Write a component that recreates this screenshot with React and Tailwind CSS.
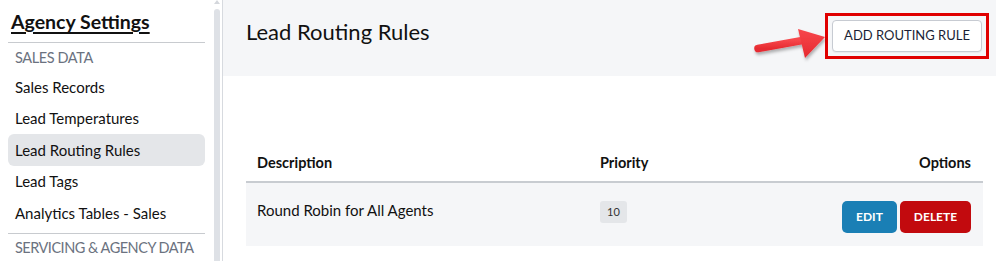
import React from "react";

const font = { fontFamily: "Lato, 'Noto Sans', sans-serif" };

function Sidebar() {
  const items = ["Sales Records", "Lead Temperatures", "Lead Routing Rules", "Lead Tags", "Analytics Tables - Sales"];
  return (
    <div className="w-[213px] shrink-0 pl-[8px] pr-[8px] pt-[9px]">
      <div className="pl-[3px] text-[19.5px] font-bold underline underline-offset-[3px] decoration-[2px] text-[#111] leading-[26px] h-[33px]">
        Agency Settings
      </div>
      <div className="h-px bg-[#c8cbcf]" />
      <div className="pl-[7px] pt-[5px] text-[14.5px] tracking-[-0.4px] text-[#6b7280] leading-[20px] h-[28px]">SALES DATA</div>
      <div className="flex flex-col">
        {items.map((t) => (
          <div
            key={t}
            className={
              "h-[31.5px] flex items-center pl-[7px] text-[15px] text-[#111] rounded-[6px] " +
              (t === "Lead Routing Rules" ? "bg-[#e4e6e9]" : "")
            }
          >
            {t}
          </div>
        ))}
      </div>
      <div className="h-px bg-[#c8cbcf] mt-[4px]" />
      <div className="pl-[7px] pt-[4px] text-[14.5px] tracking-[-0.5px] text-[#6b7280] leading-[20px] whitespace-nowrap">SERVICING &amp; AGENCY DATA</div>
    </div>
  );
}

function Scroll() {
  return (
    <div className="w-[10px] shrink-0 flex">
      <div className="w-[1px]" />
      <div className="w-[6px] flex flex-col items-center">
        <div className="w-0 h-0 border-l-[3px] border-r-[3px] border-b-[4px] border-l-transparent border-r-transparent border-b-[#d4d7dc]" />
        <div className="w-[6px] flex-1 bg-[#dee1e6] rounded-t-[3px] mt-[5px]" />
      </div>
      <div className="w-[2px]" />
      <div className="w-[1px] bg-[#d7dadf]" />
    </div>
  );
}

function Arrow() {
  return (
    <svg width="90" height="50" viewBox="0 0 90 50" className="absolute left-[522px] top-[20px]">
      <defs>
        <filter id="sh" x="-20%" y="-30%" width="140%" height="170%">
          <feDropShadow dx="1" dy="2.5" stdDeviation="1.5" floodColor="#000" floodOpacity="0.3" />
        </filter>
        <linearGradient id="g" x1="0" y1="0" x2="0" y2="1">
          <stop offset="0" stopColor="#f7474c" />
          <stop offset="1" stopColor="#e62a30" />
        </linearGradient>
      </defs>
      <g filter="url(#sh)">
        <path d="M13 28.5 L60 20" stroke="url(#g)" strokeWidth="7.5" strokeLinecap="round" />
        <path d="M53 9 L80 17 L60 38 Z" fill="url(#g)" strokeLinejoin="round" />
      </g>
    </svg>
  );
}

export default function App() {
  return (
    <div className="w-[996px] h-[261px] overflow-hidden flex bg-white" style={font}>
      <Sidebar />
      <Scroll />
      <div className="flex-1 flex flex-col">
        <div className="relative h-[76px] bg-[#f5f6f8] flex items-start justify-between pl-[23px] pr-[7px]">
          <div className="pt-[17px] text-[22px] text-[#111] leading-[30px]">Lead Routing Rules</div>
          <Arrow />
          <div className="mt-[13px] border-[3px] border-[#e00000] p-[4px]">
            <div className="w-[150px] h-[32px] bg-white border border-[#c7cbd2] rounded-[4px] flex items-center justify-center text-[13px] text-[#1a1f36] shadow-[0_1px_1px_rgba(0,0,0,0.05)]">
              ADD ROUTING RULE
            </div>
          </div>
        </div>
        <div className="pl-[23px] pr-[13px] pt-[67px]">
          <div className="flex items-center h-[40px] pt-[2px] border-b-[2px] border-[#c8ccd1] text-[14.5px] font-bold text-[#111]">
            <div className="w-[354px] pl-[11px]">Description</div>
            <div className="flex-1">Priority</div>
            <div className="pr-[12px]">Options</div>
          </div>
          <div className="flex items-center h-[63px] bg-[#f5f6f8] text-[15px] text-[#111]">
            <div className="w-[354px] pl-[11px] -mt-[8px]">Round Robin for All Agents</div>
            <div className="flex-1 -mt-[7px]">
              <span className="inline-flex items-center justify-center w-[27px] h-[22px] rounded-[3px] bg-[#e4e6e9] text-[11px] text-[#333]">10</span>
            </div>
            <div className="flex gap-[3px] pr-[12px] mt-[4px]">
              <div className="w-[55px] h-[32px] rounded-[5px] bg-[#1a7fb5] text-white text-[12px] font-bold flex items-center justify-center">EDIT</div>
              <div className="w-[71px] h-[32px] rounded-[5px] bg-[#c20a0e] text-white text-[12px] font-bold flex items-center justify-center">DELETE</div>
            </div>
          </div>
        </div>
      </div>
    </div>
  );
}
